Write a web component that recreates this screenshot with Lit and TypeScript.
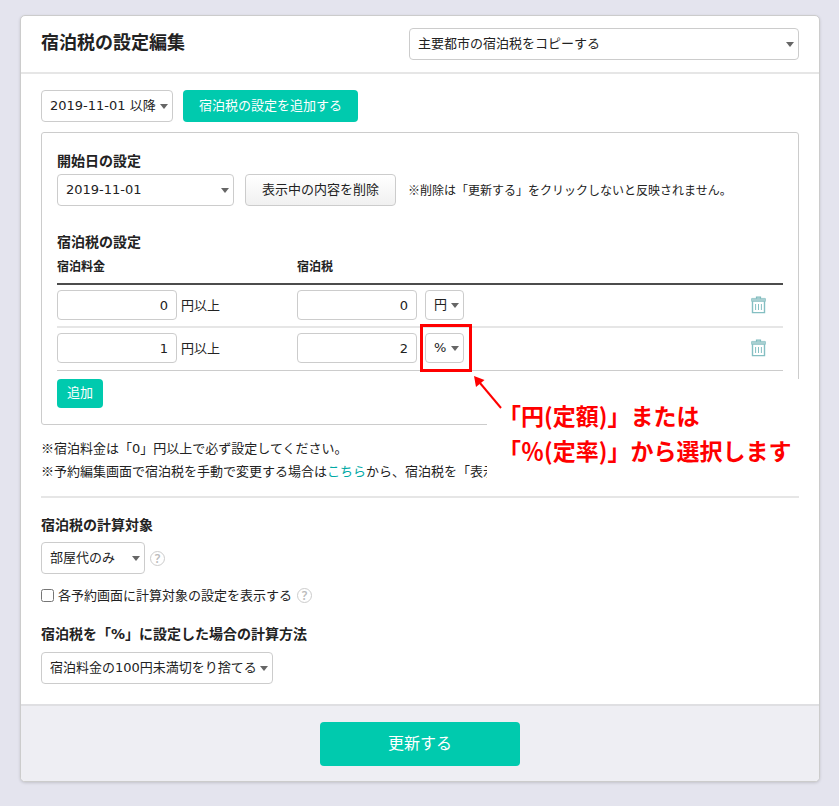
import { LitElement, html, css, svg } from "lit";
import { customElement, property } from "lit/decorators.js";

@customElement("trash-icon")
class TrashIcon extends LitElement {
  static styles = css`
    :host { display: block; width: 15px; height: 18px; }
    svg { display: block; }
  `;
  render() {
    return html`<svg width="15" height="18" viewBox="0 0 15 18" fill="none" aria-hidden="true">
      <path d="M5.5 3V1.2H9.5V3" stroke="#7dbabd" stroke-width="1.2" />
      <path d="M1.5 5V16.6H13.5V5" fill="#fff" stroke="#84bfc2" stroke-width="1.4" />
      <rect x="0.4" y="2.4" width="14.2" height="3" rx="0.6" fill="#a9d0d2" stroke="#84bfc2" stroke-width="0.7" />
      <path d="M4.6 8V14M7.5 8V14M10.4 8V14" stroke="#84bfc2" />
    </svg>`;
  }
}

@customElement("help-icon")
class HelpIcon extends LitElement {
  static styles = css`
    :host { display: block; width: 15px; height: 15px; }
    .mark {
      box-sizing: border-box;
      width: 15px;
      height: 15px;
      border: 1px solid #ccc;
      border-radius: 50%;
      color: #bbb;
      font: 600 12px/13px "Noto Sans", sans-serif;
      text-align: center;
    }
  `;
  render() {
    return html`<div class="mark">?</div>`;
  }
}

@customElement("app-root")
class AppRoot extends LitElement {
  @property({ attribute: false }) rows = [
    { fee: "0", tax: "0", unit: "円" },
    { fee: "1", tax: "2", unit: "%" },
  ];

  static styles = css`
    :host {
      display: block;
      box-sizing: border-box;
      min-height: 100vh;
      padding: 15px 19px 24px 20px;
      background: #e4e4ee;
      color: #222;
      font: 13px/22px "Noto Sans CJK JP", sans-serif;
    }
    *, *::after { box-sizing: border-box; }
    h1, h2, p { margin: 0; }
    .card {
      background: #fff;
      border: 1px solid #ccc;
      border-radius: 5px;
      box-shadow: 0 1px 3px rgba(0, 0, 0, 0.15);
      overflow: hidden;
    }
    .head {
      display: flex;
      justify-content: space-between;
      padding: 12px 20px;
      border-bottom: 2px solid #e6e6e6;
    }
    h1 { font-size: 18px; line-height: 26px; }
    h2 { font-size: 14px; line-height: 24px; }
    .body { padding: 16px 20px 20px; }
    .line { display: flex; align-items: center; }
    .num { font-family: "DejaVu Sans", sans-serif; }

    .select { position: relative; display: block; flex: none; }
    .select::after {
      content: "";
      position: absolute;
      right: 5px;
      top: calc(50% - 2px);
      border: 4px solid transparent;
      border-top: 5px solid #666;
      border-bottom: 0;
      pointer-events: none;
    }
    select, .field {
      display: block;
      width: 100%;
      height: 32px;
      margin: 0;
      padding: 0 8px;
      border: 1px solid #ccc;
      border-radius: 4px;
      background: #fff;
      color: #222;
      font: 13px/20px "DejaVu Sans", "Noto Sans CJK JP", sans-serif;
      appearance: none;
    }
    .copy { flex: 0 1 390px; }
    .period { width: 132px; }
    .start { width: 177px; }
    .target { width: 104px; margin-right: 5px; }
    .rounding { width: 232px; }
    .unit { width: 39px; margin-left: 8px; }
    .unit select, .field { height: 30px; }
    .field { width: 120px; text-align: right; }

    button {
      flex: none;
      margin: 0;
      padding: 0 0 2px;
      border: 0;
      border-radius: 4px;
      background: #00caae;
      color: #fff;
      font: 13px/20px "Noto Sans CJK JP", sans-serif;
    }
    .add-setting { width: 175px; height: 32px; margin-left: 10px; }
    .remove {
      width: 151px;
      height: 32px;
      margin: 0 12px 0 11px;
      border: 1px solid #ccc;
      background: linear-gradient(#fff, #f0f0f0);
      color: #222;
    }
    .add-row { display: block; width: 46px; height: 29px; margin-top: 8px; padding-bottom: 4px; }
    .submit { width: 200px; height: 44px; padding-bottom: 4px; font-size: 16px; }
    .icon-button { display: block; padding: 0; background: none; margin-left: auto; }

    .panel {
      position: relative;
      margin-top: 10px;
      padding: 15px 15px 16px;
      border: 1px solid #ccc;
      border-radius: 3px;
    }
    .start-line { margin: 2px 0 23px; }
    .small { font-size: 12px; }

    table { width: 100%; border-collapse: separate; border-spacing: 0; }
    th {
      padding: 4px 0 8px;
      border-bottom: 2px solid #4c4c4c;
      font-size: 12px;
      line-height: 18px;
      text-align: left;
    }
    td { padding: 5px 0 6px; border-bottom: 2px solid #e6e6e6; }
    tbody tr:last-child td { padding-bottom: 7px; border-bottom: 1px solid #ccc; }
    .fee-col { width: 240px; }
    .trash-col { width: 32px; padding-right: 17px; }
    .suffix { margin-left: 4px; }
    .marked::before {
      content: "";
      position: absolute;
      inset: -9px -8px -9px -5px;
      border: 3px solid #f00;
      pointer-events: none;
    }

    .callout {
      position: absolute;
      top: 246px;
      left: 445px;
      right: -4px;
      height: 112px;
      padding: 19px 0 0 11px;
      background: #fff;
      color: #f00;
      font-size: 23px;
      font-weight: 700;
      line-height: 35px;
      white-space: nowrap;
    }
    .arrow { position: absolute; left: -15px; top: -4px; }

    .notes { margin-top: 12px; padding-bottom: 14px; border-bottom: 2px solid #e6e6e6; white-space: nowrap; }
    a { color: #00a9a5; text-decoration: none; }
    .section { margin: 14px 0 6px; }
    .check-line { margin: 10px 0 15px; }
    .check-line label { display: flex; align-items: center; margin-right: 5px; }
    .check-line input { width: 13px; height: 13px; margin: 0 4px 0 0; }
    .method { margin-bottom: 6px; }
    .foot {
      display: flex;
      justify-content: center;
      padding: 16px 0 15px;
      border-top: 2px solid #dfdfe2;
      background: #eeeef3;
    }
  `;

  private select(name: string, label: string, options: string[]) {
    return html`<span class="select ${name}">
      <select aria-label=${label}>${options.map((o) => html`<option>${o}</option>`)}</select>
    </span>`;
  }

  render() {
    return html`
      <main class="card">
        <header class="head">
          <h1>宿泊税の設定編集</h1>
          ${this.select("copy", "コピー元", ["主要都市の宿泊税をコピーする"])}
        </header>
        <div class="body">
          <div class="line">
            ${this.select("period", "期間", ["2019-11-01 以降"])}
            <button class="add-setting" type="button">宿泊税の設定を追加する</button>
          </div>
          <section class="panel">
            <h2>開始日の設定</h2>
            <div class="line start-line">
              ${this.select("start", "開始日の設定", ["2019-11-01"])}
              <button class="remove" type="button">表示中の内容を削除</button>
              <span class="small">※削除は「更新する」をクリックしないと反映されません。</span>
            </div>
            <h2>宿泊税の設定</h2>
            <table>
              <thead>
                <tr><th class="fee-col">宿泊料金</th><th>宿泊税</th><th class="trash-col"></th></tr>
              </thead>
              <tbody>
                ${this.rows.map((r) => html`<tr>
                  <td>
                    <label class="line">
                      <input class="field" type="text" .value=${r.fee} /><span class="suffix">円以上</span>
                    </label>
                  </td>
                  <td>
                    <div class="line">
                      <input class="field" type="text" aria-label="宿泊税" .value=${r.tax} />
                      ${this.select(r.unit === "%" ? "unit marked" : "unit", "単位", [r.unit])}
                    </div>
                  </td>
                  <td class="trash-col">
                    <button class="icon-button" type="button" aria-label="削除"><trash-icon></trash-icon></button>
                  </td>
                </tr>`)}
              </tbody>
            </table>
            <button class="add-row" type="button">追加</button>
            <div class="callout">
              <svg class="arrow" width="32" height="36" viewBox="0 0 32 36" aria-hidden="true">
                ${svg`<path d="M29 33L8 8" stroke="#f00" stroke-width="2" /><path d="M2 1L12.5 5L4 12Z" fill="#f00" />`}
              </svg>
              <div>「円(定額)」または</div>
              <div>「％(定率)」から選択します</div>
            </div>
          </section>
          <div class="notes">
            <p>※宿泊料金は「<span class="num">0</span>」円以上で必ず設定してください。</p>
            <p>※予約編集画面で宿泊税を手動で変更する場合は<a href="#">こちら</a>から、宿泊税を「表示</p>
          </div>
          <h2 class="section">宿泊税の計算対象</h2>
          <div class="line">
            ${this.select("target", "宿泊税の計算対象", ["部屋代のみ"])}
            <help-icon></help-icon>
          </div>
          <div class="line check-line">
            <label><input type="checkbox" />各予約画面に計算対象の設定を表示する</label>
            <help-icon></help-icon>
          </div>
          <h2 class="method">宿泊税を「<span class="num">%</span>」に設定した場合の計算方法</h2>
          ${this.select("rounding", "計算方法", ["宿泊料金の100円未満切をり捨てる"])}
        </div>
        <footer class="foot">
          <button class="submit" type="submit">更新する</button>
        </footer>
      </main>
    `;
  }
}
